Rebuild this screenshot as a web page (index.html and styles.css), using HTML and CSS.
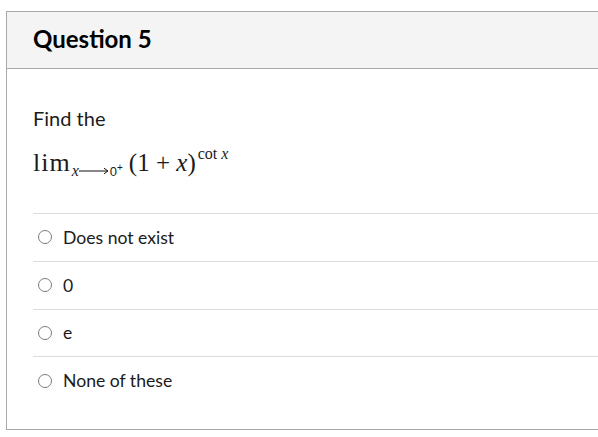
FILE: index.html
```html
<!DOCTYPE html>
<html>
<head>
<meta charset="utf-8">
<link rel="stylesheet" href="styles.css">
</head>
<body>
<div class="card">
  <div class="header"><h2 class="title">Question 5</h2></div>
  <div class="content">
    <p class="prompt">Find the</p>
    <p class="math"><span class="lim">lim</span><span class="sub"><i class="var">x</i><svg class="arrow" width="30" height="8" viewBox="0 0 30 8"><path d="M0 4H28.5M25 1.2L29 4L25 6.8" fill="none" stroke="#111" stroke-width="1"/></svg><span class="zero">0</span><span class="plus">+</span></span><span class="expr">(1 + <i class="var">x</i>)</span><span class="exp">cot <i class="var">x</i></span></p>
    <ul class="answers">
      <li class="answer"><span class="radio"></span>Does not exist</li>
      <li class="answer"><span class="radio"></span>0</li>
      <li class="answer"><span class="radio"></span>e</li>
      <li class="answer"><span class="radio"></span>None of these</li>
    </ul>
  </div>
</div>
</body>
</html>
```
FILE: styles.css
```css
html, body {
  margin: 0;
  padding: 0;
  background: #fff;
  overflow: hidden;
}
body {
  font-family: Lato, "Open Sans", sans-serif;
  color: #1b1b1b;
  padding: 11px 0 0 6px;
}
.card {
  width: 600px;
  border: 1px solid #a8a8a8;
  box-sizing: border-box;
}
.header {
  background: #f4f4f4;
  border-bottom: 1px solid #a8a8a8;
  height: 57px;
  display: flex;
  align-items: center;
  padding-left: 26px;
  padding-bottom: 3px;
  box-sizing: border-box;
}
.title {
  margin: 0;
  font-size: 24px;
  font-weight: 700;
  color: #000;
}
.content {
  padding: 37px 0 25px 26px;
}
.prompt {
  margin: 0;
  font-size: 20px;
  line-height: 24px;
}
.math {
  margin: 18px 0 0 0;
  font-family: "Liberation Serif", "DejaVu Serif", serif;
  font-size: 25px;
  line-height: 30px;
  height: 30px;
  white-space: nowrap;
}
.lim {
  font-size: 26px;
  letter-spacing: 1px;
}
.sub {
  font-size: 16px;
  line-height: 0;
  position: relative;
  top: 5px;
  margin-left: 1px;
}
.arrow {
  vertical-align: 1px;
  margin: 0 1px 0 0;
}
.zero {
  font-family: "Liberation Sans", sans-serif;
  font-size: 13px;
}
.plus {
  font-family: "Liberation Sans", sans-serif;
  font-size: 10px;
  position: relative;
  top: -5px;
}
.expr {
  margin-left: 6px;
}
.var {
  font-style: italic;
}
.exp {
  font-size: 16px;
  line-height: 0;
  position: relative;
  top: -12px;
  margin-left: 2px;
}
.answers {
  list-style: none;
  margin: 35px 0 0 0;
  padding: 0;
}
.answer {
  border-top: 1px solid #dcdcdc;
  height: 46.8px;
  display: flex;
  align-items: center;
  font-size: 17.6px;
  padding-left: 5px;
}
.radio {
  width: 12px;
  height: 12px;
  border: 1px solid #7a7a7a;
  border-radius: 50%;
  margin-right: 11px;
  flex: none;
}
```
